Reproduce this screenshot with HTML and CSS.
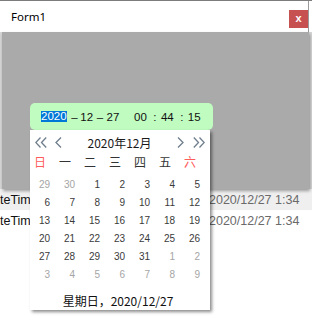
FILE: index.html
```html
<!DOCTYPE html>
<html>
<head>
<meta charset="utf-8">
<link rel="stylesheet" href="styles.css">
</head>
<body>
<div class="win">
  <div class="titlebar">
    <span class="title">Form1</span>
    <span class="close">x</span>
  </div>
  <div class="client">
    <div class="shade-wrap"><div class="shade"></div></div>
    <div class="row row-sel"><span class="c1">teTime</span><span class="c2">2020/12/27 1:34</span></div>
    <div class="row"><span class="c1">teTime</span><span class="c2">2020/12/27 1:34</span></div>
  </div>
</div>

<div class="picker">
  <div class="field">
    <span class="sel">2020</span>
    <span class="dash">–</span>
    <span class="num num-a">12</span>
    <span class="dash dash2">–</span>
    <span class="num num-b">27</span>
    <span class="num num-gap">00</span>
    <span class="colon">:</span>
    <span class="num">44</span>
    <span class="colon">:</span>
    <span class="num">15</span>
  </div>
  <div class="cal">
    <div class="cal-head">
      <svg class="dbl" width="12" height="11" viewBox="0 0 12 11"><polyline points="5.5,0.5 0.8,5.5 5.5,10.5" /><polyline points="11.2,0.5 6.5,5.5 11.2,10.5" /></svg>
      <svg class="sgl sgl-l" width="7" height="11" viewBox="0 0 7 11"><polyline points="6,0.5 1,5.5 6,10.5" /></svg>
      <span class="month">2020年12月</span>
      <svg class="sgl" width="7" height="11" viewBox="0 0 7 11"><polyline points="1,0.5 6,5.5 1,10.5" /></svg>
      <svg class="dbl dbl-r" width="12" height="11" viewBox="0 0 12 11"><polyline points="0.8,0.5 5.5,5.5 0.8,10.5" /><polyline points="6.5,0.5 11.2,5.5 6.5,10.5" /></svg>
    </div>
    <div class="week">
      <span class="wk red">日</span><span class="wk">一</span><span class="wk">二</span><span class="wk">三</span><span class="wk">四</span><span class="wk">五</span><span class="wk red">六</span>
    </div>
    <div class="days">
      <span class="d other">29</span><span class="d other">30</span><span class="d">1</span><span class="d">2</span><span class="d">3</span><span class="d">4</span><span class="d">5</span>
      <span class="d">6</span><span class="d">7</span><span class="d">8</span><span class="d">9</span><span class="d">10</span><span class="d">11</span><span class="d">12</span>
      <span class="d">13</span><span class="d">14</span><span class="d">15</span><span class="d">16</span><span class="d">17</span><span class="d">18</span><span class="d">19</span>
      <span class="d">20</span><span class="d">21</span><span class="d">22</span><span class="d">23</span><span class="d">24</span><span class="d">25</span><span class="d">26</span>
      <span class="d">27</span><span class="d">28</span><span class="d">29</span><span class="d">30</span><span class="d">31</span><span class="d other">1</span><span class="d other">2</span>
      <span class="d other">3</span><span class="d other">4</span><span class="d other">5</span><span class="d other">6</span><span class="d other">7</span><span class="d other">8</span><span class="d other">9</span>
    </div>
    <div class="foot">星期日，2020/12/27</div>
  </div>
</div>
</body>
</html>
```

FILE: styles.css
```css
html, body {
  margin: 0;
  padding: 0;
}
body {
  width: 312px;
  height: 326px;
  overflow: hidden;
  position: relative;
  background: #fff;
  font-family: "Liberation Sans", "Noto Sans CJK SC", sans-serif;
}
.win {
  width: 312px;
  border-top: 1px solid #7c7c7c;
}
.titlebar {
  width: 309px;
  height: 31px;
  box-sizing: border-box;
  border-right: 1px solid #9a9a9a;
  display: flex;
  align-items: center;
  justify-content: space-between;
  padding: 0 0 0 11px;
  background: #fff;
}
.title {
  font-family: "Noto Sans", sans-serif;
  font-size: 11.5px;
  color: #000;
  margin-top: -1px;
}
.close {
  width: 19px;
  height: 18px;
  margin-top: 4px;
  background: #c75050;
  color: #fff;
  font-family: "Liberation Sans", sans-serif;
  font-weight: bold;
  font-size: 11px;
  display: flex;
  align-items: center;
  justify-content: center;
  line-height: 1;
  padding-bottom: 1px;
  box-sizing: border-box;
}
.client {
  display: flex;
  flex-direction: column;
}
.shade-wrap {
  display: flex;
  background: #d6d6d6;
  position: relative;
  z-index: 1;
}
.shade {
  margin-left: 2px;
  width: 307px;
  height: 157px;
  background: #aaaaaa;
  box-shadow: 1px 2px 3px rgba(0, 0, 0, 0.35);
}
.row {
  height: 21px;
  display: flex;
  align-items: center;
  font-size: 12.5px;
  background: #fff;
}
.row-sel {
  background: #efefef;
}
.c1 {
  width: 209px;
  color: #111;
  white-space: nowrap;
}
.c2 {
  color: #6a6a6a;
  white-space: nowrap;
}

.picker {
  position: absolute;
  left: 30px;
  top: 103px;
  z-index: 2;
}
.field {
  width: 183px;
  height: 27px;
  box-sizing: border-box;
  background: #c0fcc0;
  border-radius: 5px;
  display: flex;
  align-items: center;
  padding-left: 11px;
  font-size: 11.5px;
  color: #111;
  white-space: nowrap;
}
.sel {
  background: #0078d7;
  color: #fff;
  line-height: 11px;
  height: 11px;
  display: inline-block;
}
.dash {
  margin-left: 4.7px;
}
.dash2 {
  margin-left: 3.7px;
}
.num {
  margin-left: 4.4px;
}
.num-a {
  margin-left: 2.6px;
}
.num-b {
  margin-left: 3.4px;
}
.num-gap {
  margin-left: 14.7px;
}
.colon {
  margin-left: 6.5px;
}
.cal {
  width: 180px;
  height: 180px;
  background: #fff;
  box-shadow: 2px 2px 3px rgba(0, 0, 0, 0.45);
  display: flex;
  flex-direction: column;
}
.cal-head {
  height: 24px;
  display: flex;
  align-items: center;
  padding: 0 5px 0 5px;
}
.cal-head svg polyline {
  fill: none;
  stroke: #6f7e8c;
  stroke-width: 1.3;
}
.sgl-l {
  margin-left: 8px;
}
.dbl-r {
  margin-left: 9px;
}
.month {
  flex: 1;
  text-align: center;
  font-family: "Noto Sans CJK SC", sans-serif;
  font-size: 12px;
  color: #1a1a1a;
}
.week {
  height: 16px;
  display: grid;
  grid-template-columns: repeat(7, 25px);
  align-items: center;
}
.wk {
  text-align: center;
  padding-right: 5px;
  font-family: "Noto Sans CJK SC", sans-serif;
  font-size: 12px;
  line-height: 16px;
  color: #333;
}
.wk.red {
  color: #ff5c5c;
}
.days {
  margin-top: 6px;
  display: grid;
  grid-template-columns: repeat(7, 25px);
  grid-auto-rows: 18px;
}
.d {
  text-align: right;
  padding-right: 5px;
  font-family: "Liberation Sans", sans-serif;
  font-size: 10px;
  line-height: 18px;
  color: #3a3a3a;
}
.d.other {
  color: #a5a5a5;
}
.foot {
  margin-top: 8px;
  height: 18px;
  line-height: 18px;
  text-align: center;
  padding-right: 4px;
  font-family: "Noto Sans CJK SC", sans-serif;
  font-size: 12px;
  color: #111;
}
```
